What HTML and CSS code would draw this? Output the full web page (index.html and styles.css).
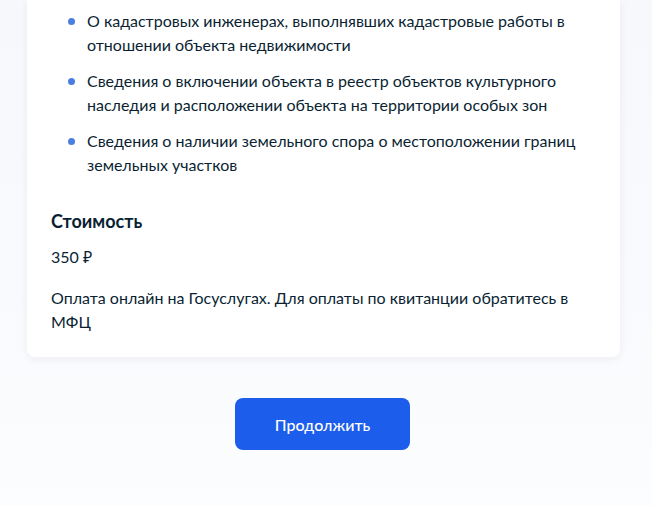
FILE: index.html
```html
<!DOCTYPE html>
<html lang="ru">
<head>
<meta charset="utf-8">
<link rel="stylesheet" href="styles.css">
</head>
<body>
<div class="page">
  <section class="card">
    <ul class="list">
      <li>О кадастровых инженерах, выполнявших кадастровые работы в отношении объекта недвижимости</li>
      <li>Сведения о включении объекта в реестр объектов культурного наследия и расположении объекта на территории особых зон</li>
      <li>Сведения о наличии земельного спора о местоположении границ земельных участков</li>
    </ul>
    <h3 class="title">Стоимость</h3>
    <p class="price">350 ₽</p>
    <p class="note">Оплата онлайн на Госуслугах. Для оплаты по квитанции обратитесь в МФЦ</p>
  </section>
  <div class="actions">
    <button class="btn">Продолжить</button>
  </div>
</div>
</body>
</html>
```
FILE: styles.css
```css
html, body {
  margin: 0;
  padding: 0;
}
body {
  min-height: 506px;
  background: linear-gradient(180deg, #f6f8fc 0%, #f9fafd 60%, #fcfdfe 100%);
  font-family: Lato, "Noto Sans", sans-serif;
  color: #0b1f33;
  font-size: 16px;
  line-height: 24px;
}
.page {
  width: 593px;
  margin-left: 27px;
}
.card {
  background: #fff;
  border-radius: 0 0 8px 8px;
  box-shadow: 0 2px 10px rgba(11, 31, 51, 0.06);
  padding: 9px 24px 23px 24px;
}
.list {
  list-style: none;
  margin: 0;
  padding: 0;
  display: flex;
  flex-direction: column;
  gap: 12px;
}
.list li {
  position: relative;
  padding-left: 36px;
}
.list li::before {
  content: "";
  position: absolute;
  left: 17px;
  top: 9px;
  width: 7px;
  height: 7px;
  border-radius: 50%;
  background: #4a7ee0;
}
.title {
  margin: 32px 0 0;
  font-size: 18px;
  line-height: 24px;
  font-weight: 700;
}
.price {
  margin: 12px 0 0;
}
.note {
  margin: 17px 0 0;
}
.actions {
  display: flex;
  justify-content: center;
  margin-top: 41px;
  padding-right: 2px;
}
.btn {
  height: 52px;
  padding: 0 40px;
  border: 0;
  border-radius: 8px;
  background: #1d5deb;
  color: #fff;
  font-family: Lato, "Noto Sans", sans-serif;
  font-size: 16px;
  font-weight: 500;
}
```
